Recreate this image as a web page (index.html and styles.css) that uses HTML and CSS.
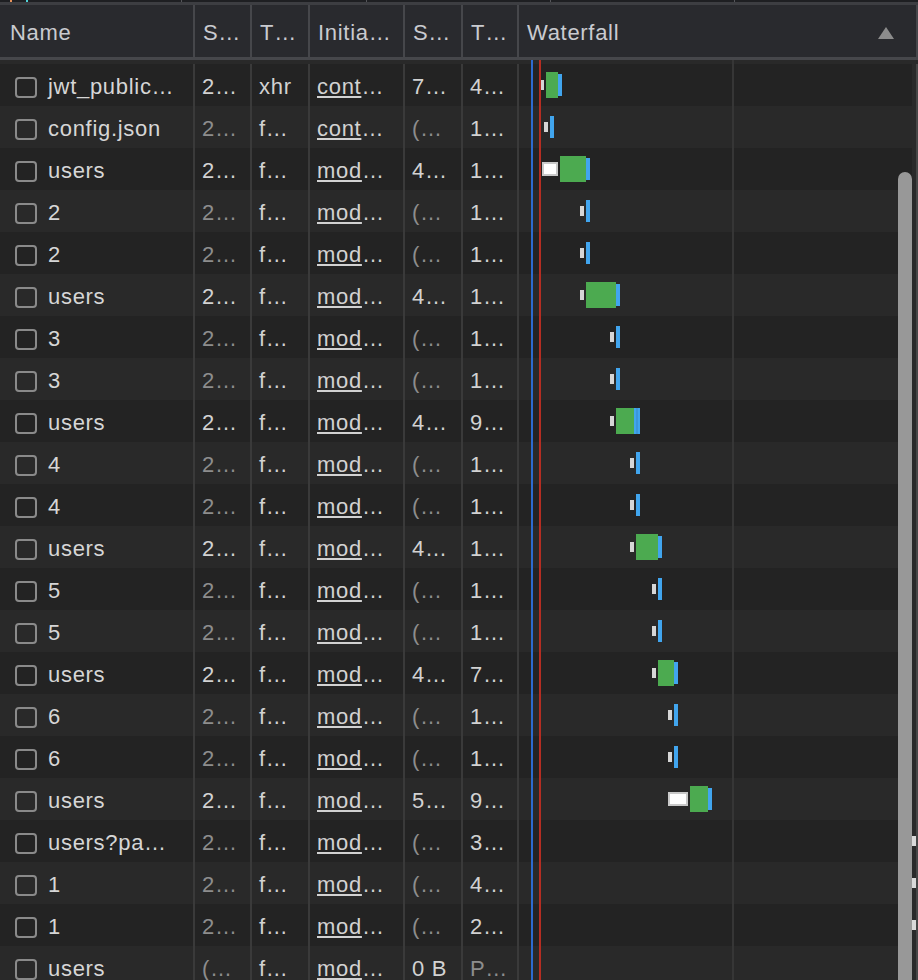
FILE: index.html
```html
<!DOCTYPE html>
<html lang="en">
<head>
    <meta charset="UTF-8">
    <title>Network</title>
    <link rel="stylesheet" href="styles.css">
</head>
<body>
    <div class="overview">
        <div class="seg first"><span class="tick orange"></span><span class="tick cyan"></span></div>
        <div class="seg"></div>
        <div class="seg"></div>
        <div class="seg"></div>
        <div class="seg"></div>
    </div>
    <div class="head">
        <div class="cell">Name</div>
        <div class="cell">S…</div>
        <div class="cell">T…</div>
        <div class="cell">Initia…</div>
        <div class="cell">S…</div>
        <div class="cell">T…</div>
        <div class="cell waterfall-head">
            Waterfall
            <svg width="16" height="12" viewBox="0 0 16 12"><polygon points="8,0 16,12 0,12" fill="#8c8c8c"/></svg>
        </div>
    </div>
    <div class="list">
        <div class="rows">
            <!-- rows are added by the script below -->
        </div>
        <div class="marker blue"></div>
        <div class="marker red"></div>
        <div class="divider"></div>
        <div class="thumb"></div>
    </div>
    <script>
        // bars: [kind, left x, width] in page pixels
        const rows = [
            { name: 'jwt_public…', status: '2…', type: 'xhr', init: 'cont', size: '7…', time: '4…', bars: [['q', 541, 3], ['g', 546, 12], ['b', 558, 4]] },
            { name: 'config.json', status: '2…', type: 'f…', init: 'cont', size: '(…', time: '1…', dim: ['status', 'size'], bars: [['q', 544, 4], ['b', 550, 4]] },
            { name: 'users', status: '2…', type: 'f…', init: 'mod', size: '4…', time: '1…', bars: [['w', 542, 16], ['g', 560, 26], ['b', 586, 4]] },
            { name: '2', status: '2…', type: 'f…', init: 'mod', size: '(…', time: '1…', dim: ['status', 'size'], bars: [['q', 580, 4], ['b', 586, 4]] },
            { name: '2', status: '2…', type: 'f…', init: 'mod', size: '(…', time: '1…', dim: ['status', 'size'], bars: [['q', 580, 4], ['b', 586, 4]] },
            { name: 'users', status: '2…', type: 'f…', init: 'mod', size: '4…', time: '1…', bars: [['q', 580, 4], ['g', 586, 30], ['b', 616, 4]] },
            { name: '3', status: '2…', type: 'f…', init: 'mod', size: '(…', time: '1…', dim: ['status', 'size'], bars: [['q', 610, 4], ['b', 616, 4]] },
            { name: '3', status: '2…', type: 'f…', init: 'mod', size: '(…', time: '1…', dim: ['status', 'size'], bars: [['q', 610, 4], ['b', 616, 4]] },
            { name: 'users', status: '2…', type: 'f…', init: 'mod', size: '4…', time: '9…', bars: [['q', 610, 4], ['g', 616, 18], ['b tall', 634, 6]] },
            { name: '4', status: '2…', type: 'f…', init: 'mod', size: '(…', time: '1…', dim: ['status', 'size'], bars: [['q', 630, 4], ['b', 636, 4]] },
            { name: '4', status: '2…', type: 'f…', init: 'mod', size: '(…', time: '1…', dim: ['status', 'size'], bars: [['q', 630, 4], ['b', 636, 4]] },
            { name: 'users', status: '2…', type: 'f…', init: 'mod', size: '4…', time: '1…', bars: [['q', 630, 4], ['g', 636, 22], ['b', 658, 4]] },
            { name: '5', status: '2…', type: 'f…', init: 'mod', size: '(…', time: '1…', dim: ['status', 'size'], bars: [['q', 652, 4], ['b', 658, 4]] },
            { name: '5', status: '2…', type: 'f…', init: 'mod', size: '(…', time: '1…', dim: ['status', 'size'], bars: [['q', 652, 4], ['b', 658, 4]] },
            { name: 'users', status: '2…', type: 'f…', init: 'mod', size: '4…', time: '7…', bars: [['q', 652, 4], ['g', 658, 16], ['b', 674, 4]] },
            { name: '6', status: '2…', type: 'f…', init: 'mod', size: '(…', time: '1…', dim: ['status', 'size'], bars: [['q', 668, 4], ['b', 674, 4]] },
            { name: '6', status: '2…', type: 'f…', init: 'mod', size: '(…', time: '1…', dim: ['status', 'size'], bars: [['q', 668, 4], ['b', 674, 4]] },
            { name: 'users', status: '2…', type: 'f…', init: 'mod', size: '5…', time: '9…', bars: [['w', 668, 20], ['g', 690, 18], ['b', 708, 4]] },
            { name: 'users?pa…', status: '2…', type: 'f…', init: 'mod', size: '(…', time: '3…', dim: ['status', 'size'], edge: true },
            { name: '1', status: '2…', type: 'f…', init: 'mod', size: '(…', time: '4…', dim: ['status', 'size'], edge: true },
            { name: '1', status: '2…', type: 'f…', init: 'mod', size: '(…', time: '2…', dim: ['status', 'size'], edge: true },
            { name: 'users', status: '(…', type: 'f…', init: 'mod', size: '0 B', time: 'P…', dim: ['status', 'time'] }
        ];

        const list = document.querySelector('.rows');
        rows.forEach(r => {
            const dim = r.dim || [];
            const cell = (key, text) => `<div class="cell${dim.includes(key) ? ' dim' : ''}">${text}</div>`;
            let bars = '';
            let x = 519;
            (r.bars || []).forEach(([kind, left, width]) => {
                bars += `<span class="bar ${kind}" style="margin-left:${left - x}px;width:${width}px"></span>`;
                x = left + width;
            });
            const row = document.createElement('div');
            row.className = 'row';
            row.innerHTML = `
                <div class="cell name"><span class="check"></span>${r.name}</div>
                ${cell('status', r.status)}
                ${cell('type', r.type)}
                <div class="cell"><span class="link">${r.init}</span>…</div>
                ${cell('size', r.size)}
                ${cell('time', r.time)}
                <div class="cell waterfall">${bars}</div>
                <div class="edge">${r.edge ? '<span class="mark"></span>' : ''}</div>
            `;
            list.appendChild(row);
        });
    </script>
</body>
</html>
```
FILE: styles.css
```css
body {
    margin: 0;
    width: 918px;
    height: 980px;
    overflow: hidden;
    background-color: #232323;
    font-family: 'Liberation Sans', Arial, sans-serif;
    font-size: 22px;
    letter-spacing: 0.7px;
    color: #d2d2d2;
}

/* overview strip at the very top */
.overview {
    display: flex;
    height: 2px;
    background-color: #1e1f22;
    border-bottom: 3px solid #3d3e42;
}

.overview .seg {
    width: 200px;
    border-left: 1px solid #55565a;
    display: flex;
}

.overview .seg.first {
    width: 198px;
    border-left: none;
}

.tick {
    width: 2px;
    height: 2px;
}

.tick.orange {
    margin-left: 10px;
    background-color: #e8925a;
}

.tick.cyan {
    margin-left: 14px;
    background-color: #4fd3d8;
}

/* header */
.head {
    display: grid;
    grid-template-columns: 193px 57px 58px 95px 58px 56px 1fr;
    height: 52px;
    background-color: #292a2e;
    border-bottom: 3px solid #46474b;
    color: #c9cbd0;
}

.head .cell {
    display: flex;
    align-items: center;
    padding-top: 4px;
    padding-left: 8px;
    border-left: 2px solid #46474b;
    white-space: nowrap;
}

.head .cell:first-child {
    padding-left: 10px;
    border-left: none;
}

.head .waterfall-head {
    justify-content: space-between;
    padding-right: 22px;
    border-right: 2px solid #46474b;
}

/* request rows */
.list {
    position: relative;
}

.rows {
    padding-top: 4px;
    background-color: #292929;
}

.row {
    display: grid;
    grid-template-columns: 193px 57px 58px 95px 58px 56px 1fr 6px;
    height: 42px;
    background-color: #292929;
}

.row:nth-child(odd) {
    background-color: #232323;
}

.row .cell {
    display: flex;
    align-items: center;
    padding-top: 4px;
    padding-left: 7px;
    border-left: 2px solid #3a3a3a;
    white-space: nowrap;
    overflow: hidden;
}

.row .cell.name {
    padding-left: 15px;
    border-left: none;
    gap: 11px;
    color: #d6d6d6;
}

.row .cell.dim {
    color: #8d8d8d;
}

.check {
    width: 22px;
    height: 21px;
    box-sizing: border-box;
    border: 2px solid #8a8a8a;
    border-radius: 4px;
    flex-shrink: 0;
}

.link {
    text-decoration: underline;
    text-decoration-thickness: 2px;
    text-underline-offset: 2px;
}

.row .cell.waterfall {
    padding-top: 0;
    padding-left: 0;
}

.bar {
    flex-shrink: 0;
    box-sizing: border-box;
}

.bar.q {
    height: 10px;
    background-color: #d6d6d6;
}

.bar.g {
    height: 26px;
    background-color: #4caa50;
}

.bar.b {
    height: 22px;
    background-color: #41a5ee;
}

.bar.b.tall {
    height: 26px;
    border-left: 2px solid #41a5ee;
    border-right: 2px solid #41a5ee;
    background-color: #3a97dc;
}

.bar.w {
    height: 14px;
    background-color: #ffffff;
    border: 2px solid #c9c9c9;
}

.edge {
    display: flex;
    align-items: center;
    background-color: #2a2a2a;
    border-right: 2px solid #474747;
}

.mark {
    width: 4px;
    height: 10px;
    background-color: #d9d9d9;
}

/* lines drawn over the waterfall */
.marker, .divider {
    position: absolute;
    top: 0;
    bottom: 0;
    width: 2px;
}

.marker.blue {
    left: 531px;
    background-color: #2d6bcf;
}

.marker.red {
    left: 539px;
    background-color: #b52d22;
}

.divider {
    left: 732px;
    background-color: #363636;
}

.thumb {
    position: absolute;
    left: 898px;
    top: 112px;
    bottom: -20px;
    width: 14px;
    border-radius: 7px;
    background-color: #989898;
}
```
